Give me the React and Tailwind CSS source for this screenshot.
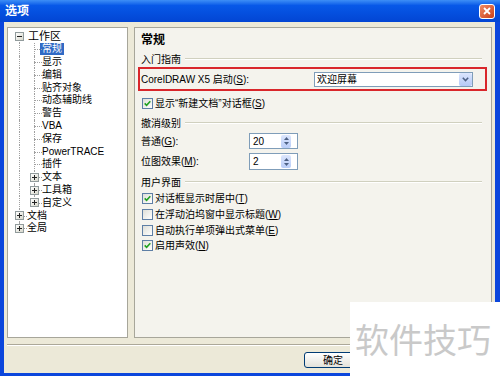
import React from 'react';

const LINE = 'border-[#a0a0a0] border-dotted';

// one indent column of the tree: connector lines and an optional +/- box
const Cell = ({ type, box }) => (
  <div className="relative w-[15px] h-full shrink-0">
    {(type === 'full' || type === 'tee') && <div className={`absolute left-[7px] top-0 bottom-0 border-l ${LINE}`} />}
    {type === 'elbow' && <div className={`absolute left-[7px] top-0 h-1/2 border-l ${LINE}`} />}
    {type === 'down' && <div className={`absolute left-[7px] top-1/2 bottom-0 border-l ${LINE}`} />}
    {(type === 'tee' || type === 'elbow') && <div className={`absolute left-[7px] right-0 top-1/2 border-t ${LINE}`} />}
    {box && (
      <div className="absolute left-[3px] top-[2px] w-[9px] h-[9px] border border-[#919b9c] bg-linear-to-br from-white to-[#d8d8cc] flex items-center justify-center">
        <svg width="5" height="5" viewBox="0 0 5 5">
          <path d="M0 2.5h5" stroke="#222" strokeWidth="1" />
          {box === '+' && <path d="M2.5 0v5" stroke="#222" strokeWidth="1" />}
        </svg>
      </div>
    )}
  </div>
);

const treeRows = [
  { cells: [{ type: 'down', box: '-' }], label: '工作区', big: true },
  { cells: [{ type: 'full' }, { type: 'tee' }], label: '常规', selected: true },
  { cells: [{ type: 'full' }, { type: 'tee' }], label: '显示' },
  { cells: [{ type: 'full' }, { type: 'tee' }], label: '编辑' },
  { cells: [{ type: 'full' }, { type: 'tee' }], label: '贴齐对象' },
  { cells: [{ type: 'full' }, { type: 'tee' }], label: '动态辅助线' },
  { cells: [{ type: 'full' }, { type: 'tee' }], label: '警告' },
  { cells: [{ type: 'full' }, { type: 'tee' }], label: 'VBA' },
  { cells: [{ type: 'full' }, { type: 'tee' }], label: '保存' },
  { cells: [{ type: 'full' }, { type: 'tee' }], label: 'PowerTRACE' },
  { cells: [{ type: 'full' }, { type: 'tee' }], label: '插件' },
  { cells: [{ type: 'full' }, { type: 'tee', box: '+' }], label: '文本' },
  { cells: [{ type: 'full' }, { type: 'tee', box: '+' }], label: '工具箱' },
  { cells: [{ type: 'full' }, { type: 'elbow', box: '+' }], label: '自定义' },
  { cells: [{ type: 'tee', box: '+' }], label: '文档' },
  { cells: [{ type: 'elbow', box: '+' }], label: '全局' },
];

const Check = ({ checked }) => (
  <span className="w-[11px] h-[11px] shrink-0 border border-[#5e7fa6] bg-linear-to-br from-[#dedfd8] to-white flex items-center justify-center">
    {checked && (
      <svg width="7" height="7" viewBox="0 0 7 7">
        <path d="M0.7 3.4 L2.6 5.3 L6.3 1.2" stroke="#21a121" strokeWidth="1.6" fill="none" />
      </svg>
    )}
  </span>
);

const GroupTitle = ({ children }) => (
  <div className="flex items-center h-[14px] pl-[6px] pr-[9px]">
    <span>{children}</span>
    <div className="flex-1 ml-[4px] h-[2px] border-t border-[#d0d0bf] border-b border-b-white" />
  </div>
);

const Spin = ({ value }) => (
  <div className="w-[49px] h-full border border-[#7f9db9] bg-white flex items-center">
    <span className="pl-[3px] flex-1">{value}</span>
    <div className="w-[10px] h-[13px] mr-[6px] rounded-[2px] bg-linear-to-b from-[#dce6fd] to-[#b9cdf8] flex flex-col items-center justify-center gap-[2px]">
      <svg width="5" height="3" viewBox="0 0 5 3"><path d="M0 3 L2.5 0 L5 3z" fill="#4d6185" /></svg>
      <svg width="5" height="3" viewBox="0 0 5 3"><path d="M0 0 L2.5 3 L5 0z" fill="#4d6185" /></svg>
    </div>
  </div>
);

const Key = ({ k }) => (
  <span>(<u>{k}</u>)</span>
);

export default function App() {
  return (
    <div className="w-[500px] h-[376px] relative overflow-hidden bg-[#0b46dc] flex flex-col text-[10px] text-black font-['Liberation_Sans','Noto_Sans_CJK_SC',sans-serif]">
      {/* title bar */}
      <div className="h-[22px] shrink-0 flex items-center justify-between pl-[5px] pr-[5px] bg-linear-to-b from-[#3d8ef6] via-[#0758e8] via-25% to-[#0345d3]">
        <span className="text-white font-bold text-[12px]">选项</span>
        <div className="w-[16px] h-[15px] rounded-[3px] border border-white bg-linear-to-br from-[#f08a62] to-[#c83d15] flex items-center justify-center">
          <svg width="8" height="8" viewBox="0 0 8 8">
            <path d="M1 1 L7 7 M7 1 L1 7" stroke="white" strokeWidth="1.8" />
          </svg>
        </div>
      </div>

      {/* dialog body */}
      <div className="flex-1 ml-[4px] mr-[5px] mb-[3px] bg-[#ece9d8] flex flex-col pt-[5px]">
        <div className="flex px-[3px] gap-[6px] h-[311px]">
          {/* tree */}
          <div className="w-[121px] h-full border border-[#a7a69a] bg-white pt-[2px] pl-[4px]">
            {treeRows.map((r) => (
              <div key={r.label} className="flex items-center h-[12.8px]">
                {r.cells.map((c, i) => (
                  <Cell key={i} type={c.type} box={c.box} />
                ))}
                <span
                  className={`${r.big ? 'text-[11px] ml-[1px]' : ''} ${
                    r.selected ? 'bg-[#316ac5] text-white px-[2px] -ml-[2px]' : ''
                  } leading-[12px]`}
                >
                  {r.label}
                </span>
              </div>
            ))}
          </div>

          {/* page */}
          <div className="flex-1 h-full border border-[#a7a69a] bg-[#f4f3ed] flex flex-col">
            <div className="mt-[3px] h-[18px] pl-[6px] flex items-center font-bold text-[12px]">常规</div>
            <div className="mt-[3px]">
              <GroupTitle>入门指南</GroupTitle>
            </div>
            <div className="mt-[1px] ml-[3px] mr-[4px] h-[24px] border-2 border-[#d9262b] flex items-center pl-[1px]">
              <span>
                CorelDRAW X5 启动<Key k="S" />:
              </span>
              <div className="ml-auto mr-[12px] w-[159px] h-[15px] border border-[#7f9db9] bg-white flex items-center">
                <span className="pl-[2px] flex-1">欢迎屏幕</span>
                <div className="w-[13px] h-[13px] rounded-[2px] bg-linear-to-b from-[#dce6fd] to-[#b5c9f7] flex items-center justify-center">
                  <svg width="7" height="5" viewBox="0 0 7 5">
                    <path d="M0.8 0.8 L3.5 3.6 L6.2 0.8" stroke="#4d6185" strokeWidth="1.5" fill="none" />
                  </svg>
                </div>
              </div>
            </div>
            <div className="mt-[5px] h-[14px] pl-[7px] flex items-center gap-[2px]">
              <Check checked />
              <span>
                显示“新建文档”对话框<Key k="S" />
              </span>
            </div>
            <div className="mt-[6px]">
              <GroupTitle>撤消级别</GroupTitle>
            </div>
            <div className="mt-[3px] h-[16px] pl-[6px] flex items-center">
              <span className="w-[108px]">
                普通<Key k="G" />:
              </span>
              <Spin value="20" />
            </div>
            <div className="mt-[4px] h-[17px] pl-[6px] flex items-center">
              <span className="w-[108px]">
                位图效果<Key k="M" />:
              </span>
              <Spin value="2" />
            </div>
            <div className="mt-[5px]">
              <GroupTitle>用户界面</GroupTitle>
            </div>
            <div className="mt-[2px] flex flex-col pl-[7px]">
              {[
                ['对话框显示时居中', 'T', true],
                ['在浮动泊坞窗中显示标题', 'W', false],
                ['自动执行单项弹出式菜单', 'E', false],
                ['启用声效', 'N', true],
              ].map(([t, k, c]) => (
                <div key={t} className="h-[15.7px] flex items-center gap-[2px]">
                  <Check checked={c} />
                  <span>
                    {t}
                    <Key k={k} />
                  </span>
                </div>
              ))}
            </div>
          </div>
        </div>

        {/* separator + button */}
        <div className="mt-[6px] mx-[3px] h-[2px] border-t border-[#aca899] border-b border-b-white" />
        <div className="mt-[6px] flex pl-[300px]">
          <div className="w-[58px] h-[16px] rounded-[3px] border border-[#003c74] bg-linear-to-b from-white to-[#e3e2da] flex items-center justify-center">
            确定
          </div>
        </div>
      </div>

      {/* watermark */}
      <div className="absolute left-[350px] top-[302px] w-[150px] h-[74px] bg-white flex items-center pl-[5px]">
        <span className="text-[34px] leading-none text-[#c9c9c9] font-['Noto_Sans_CJK_SC',sans-serif]">软件技巧</span>
      </div>
    </div>
  );
}
